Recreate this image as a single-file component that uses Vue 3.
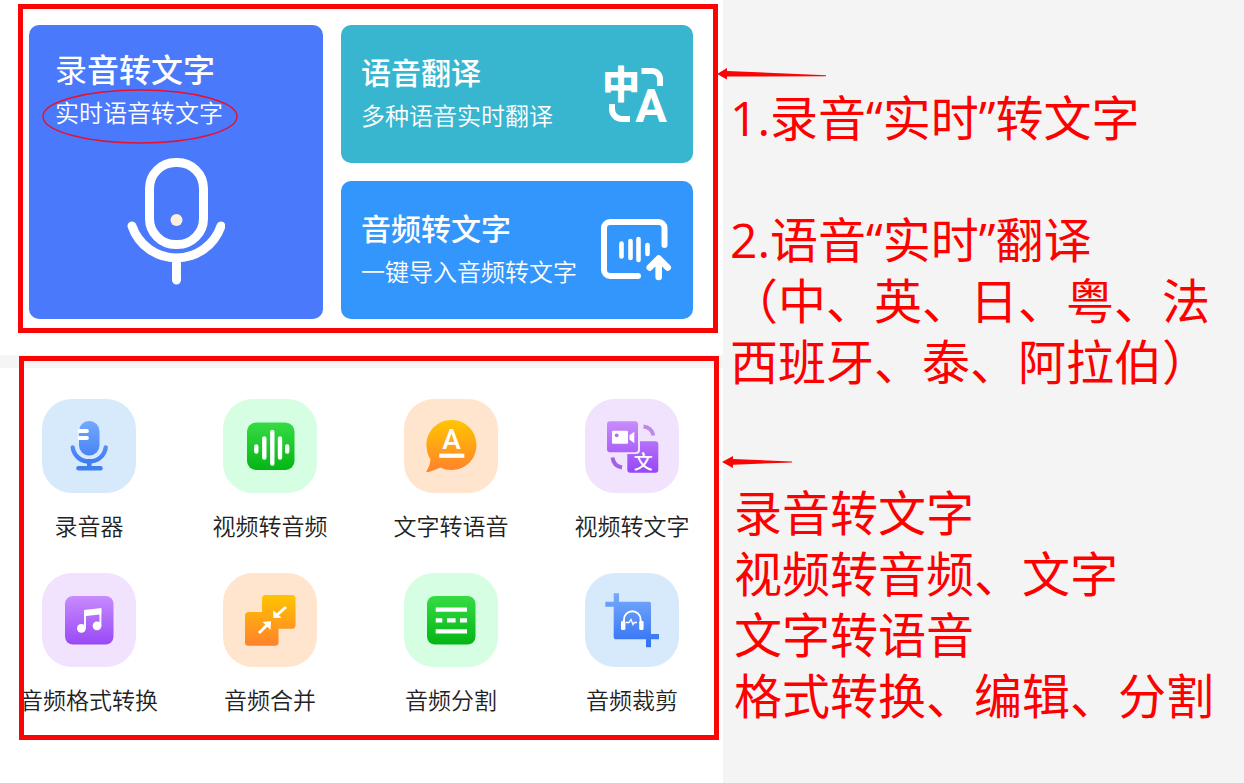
<template>
  <div class="page">
    <!-- 渐变定义,图标共用 -->
    <svg class="defs" width="0" height="0" aria-hidden="true">
      <defs>
        <linearGradient
          v-for="g in gradients"
          :id="g.id"
          :key="g.id"
          gradientUnits="userSpaceOnUse"
          x1="0"
          y1="22"
          x2="0"
          y2="73"
        >
          <stop offset="0" :stop-color="g.from" />
          <stop offset="1" :stop-color="g.to" />
        </linearGradient>
      </defs>
    </svg>

    <main class="app">
      <!-- 主要功能 -->
      <section class="feature-box">
        <button type="button" class="card card-record">
          <span class="card-text">
            <span class="card-title"><span class="thin">录</span>音转文字</span>
            <span class="card-sub">实时语音转文字</span>
          </span>
          <svg class="circle-mark" viewBox="0 0 196 55" fill="none" stroke="#e8102c">
            <ellipse cx="98" cy="27.5" rx="97" ry="26.5" stroke-width="1.4" />
          </svg>
          <svg class="mic" viewBox="0 0 98 128" fill="none" stroke="#fff" stroke-width="9" stroke-linecap="round">
            <rect x="22.5" y="5.5" width="54" height="82" rx="26" />
            <circle cx="49.5" cy="63" r="6" fill="#fdeee2" stroke="none" />
            <path d="M5 69A47 47 0 0 0 94 69M49.5 104v19" />
          </svg>
        </button>

        <div class="card-column">
          <button type="button" class="card card-translate">
            <span class="card-text">
              <span class="card-title">语音翻译</span>
              <span class="card-sub">多种语音实时翻译</span>
            </span>
            <svg class="card-icon" viewBox="0 0 72 64">
              <text class="glyph-zh" x="20" y="36" text-anchor="middle">中</text>
              <text class="glyph-en" x="50" y="60" text-anchor="middle">A</text>
              <path d="M40.500 9H51a8 8 0 0 1 8 8v7M11 42v5a10 10 0 0 0 10 10h8" fill="none" stroke="#fff" stroke-width="6" />
            </svg>
          </button>

          <button type="button" class="card card-import">
            <span class="card-text">
              <span class="card-title">音频转文字</span>
              <span class="card-sub">一键导入音频转文字</span>
            </span>
            <svg class="card-icon" viewBox="0 0 72 64" fill="none" stroke="#fff" stroke-width="6" stroke-linecap="round" stroke-linejoin="round">
              <path d="M63.500 27V10a6 6 0 0 0-6-6H9a6 6 0 0 0-6 6v42a6 6 0 0 0 6 6h28" />
              <path d="M20.500 25.500v13M29.500 23v17M37.500 21v21M46.500 27v9" stroke-width="4.600" />
              <path d="M57.700 41v18M48.700 49.500l9-9 9 9" stroke-width="6.600" />
            </svg>
          </button>
        </div>
      </section>

      <!-- 工具列表 -->
      <section class="tools">
        <div class="tool-box">
          <button v-for="tool in tools" :key="tool.name" type="button" class="tool">
            <span :class="['tile', tool.color]">
              <svg v-if="tool.icon === 'mic'" viewBox="0 0 94 94" fill="none" stroke-linecap="round">
                <rect x="37" y="22" width="20.500" height="34.500" rx="10" fill="url(#blue)" />
                <path d="M37.500 32h7.500M37.500 39h7.500" stroke="#fff" stroke-width="3.800" />
                <path d="M30.700 48.500C32 57 39 62.500 47.300 62.500S62.500 57 63.700 48.500" stroke="url(#blue)" stroke-width="4.400" />
                <path d="M47.300 62v6M36.500 69.300h22" stroke="#3f7fee" stroke-width="4.600" />
              </svg>

              <svg v-else-if="tool.icon === 'wave'" viewBox="0 0 94 94">
                <rect x="24" y="23.500" width="47.500" height="47.500" rx="9" fill="url(#green)" />
                <path
                  d="M33.300 47.500v5M41.300 39.500v19M49.300 33v31.500M57 39.500v19M64.200 47.500v5"
                  stroke="#fff"
                  stroke-width="4.400"
                  stroke-linecap="round"
                />
              </svg>

              <svg v-else-if="tool.icon === 'bubble'" viewBox="0 0 94 94">
                <path
                  d="M47.500 21C61.600 21 72.500 32 72.500 46S61.600 71 47.500 71C43.500 71 40 70.300 36.500 68.500C32 70.500 27.500 72.500 22.800 73.300C22.300 73.300 22.200 72.800 22.400 72.400C24.500 69 26 65.500 26.500 60.500C23.800 56 22.500 51.500 22.500 46C22.500 32 33.500 21 47.500 21Z"
                  fill="url(#orange)"
                />
                <text class="bubble-a" x="47.500" y="50" text-anchor="middle">A</text>
                <rect x="35.300" y="54.600" width="25" height="4.200" fill="#fff" />
              </svg>

              <svg v-else-if="tool.icon === 'video'" viewBox="0 0 94 94">
                <rect x="42.300" y="42.300" width="31" height="31.500" rx="3" fill="url(#purple)" />
                <rect x="20" y="20" width="35" height="35" rx="4" fill="#f1e3fe" />
                <rect x="22" y="22.300" width="31" height="31" rx="3" fill="url(#purple)" />
                <rect x="27" y="31.700" width="16" height="13" rx="1" fill="#fff" />
                <path d="M49.300 32.700v11.600L44.500 40.500v-4.200Z" fill="#fff" />
                <circle cx="31.700" cy="36.300" r="1.900" fill="#b36df7" />
                <text class="video-zh" x="58.200" y="69.500" text-anchor="middle">文</text>
                <path d="M58.500 27.500C63.500 28 67.500 31.500 68.300 36.500" fill="none" stroke="#bd8aec" stroke-width="4" />
                <path d="M27.500 58.500C28.200 64 31.500 67.500 37 68.500" fill="none" stroke="#9f62e4" stroke-width="4" />
              </svg>

              <svg v-else-if="tool.icon === 'music'" viewBox="0 0 94 94">
                <rect x="23" y="23" width="48.500" height="48.500" rx="8" fill="url(#purple)" />
                <path d="M42 37L59.300 35V41.200L42 43.200Z" fill="#fff" />
                <path d="M43 38v17M58.400 36v17" stroke="#fff" stroke-width="1.900" />
                <circle cx="39.400" cy="55.300" r="4.400" fill="#fff" />
                <circle cx="55" cy="52.800" r="4.400" fill="#fff" />
              </svg>

              <svg v-else-if="tool.icon === 'merge'" viewBox="0 0 94 94">
                <rect x="39" y="22" width="33.500" height="33.700" rx="3.500" fill="url(#orange)" />
                <rect x="22" y="39" width="33.500" height="33.700" rx="3.500" fill="url(#orange)" />
                <path d="M63 34L54 42M36 60L44.500 51.500" stroke="#fff" stroke-width="3" />
                <path d="M50.300 37.500L58.700 44.800L50.300 45ZM39.500 49L48 48L47.500 56.700Z" fill="#fff" />
              </svg>

              <svg v-else-if="tool.icon === 'split'" viewBox="0 0 94 94">
                <rect x="23" y="23" width="48.500" height="48.500" rx="8" fill="url(#green)" />
                <path d="M31.700 36.700h31.300M31.700 47.300h6.600M43 47.300h8.600M56 47.300h7M31.700 58.300h31.300" stroke="#fff" stroke-width="4.200" />
              </svg>

              <svg v-else viewBox="0 0 94 94">
                <path
                  d="M28.700 20.300H34V28.700H64Q66 28.700 66 30.700V61H74V66.300H66V74.300H61V66.300H30.700Q28.700 66.300 28.700 64.300V33.700H20.300V28.700H28.700Z"
                  fill="url(#blue)"
                />
                <path d="M39 49.500V46.500a8.200 8.200 0 0 1 16.600 0V49.500" fill="none" stroke="#fff" stroke-width="1.900" />
                <rect x="36" y="47.700" width="4.400" height="9.300" rx="1.600" fill="#fff" />
                <rect x="54.200" y="47.700" width="4.400" height="9.300" rx="1.600" fill="#fff" />
                <path d="M41 49.500h3l2-3 2 5 1.300-2h2.700" fill="none" stroke="#fff" stroke-width="1.300" />
              </svg>
            </span>
            <span class="tool-name">{{ tool.name }}</span>
          </button>
        </div>
      </section>
    </main>

    <!-- 右侧说明 -->
    <aside class="notes">
      <svg class="arrow arrow-top" viewBox="0 0 110 12" fill="#fa0505">
        <path d="M0 6L10 0V3L109 7.300V8.300L10 8.500V11.500Z" />
      </svg>
      <p class="note">1.录音“实时”转文字<br /><br />2.语音“实时”翻译<br />（中、英、日、粤、法<br />西班牙、泰、阿拉伯）</p>
      <svg class="arrow arrow-bottom" viewBox="0 0 72 12" fill="#fa0505">
        <path d="M0 6L11 0V3L70 5.600V6.400L11 8.800V12Z" />
      </svg>
      <p class="note note-list">录音转文字<br />视频转音频、文字<br />文字转语音<br />格式转换、编辑、分割</p>
    </aside>
  </div>
</template>

<script setup>
import { ref } from 'vue'

// 图标渐变色
const gradients = [
  { id: 'blue', from: '#75a9fc', to: '#3272f2' },
  { id: 'green', from: '#38dc46', to: '#02b413' },
  { id: 'orange', from: '#ffc400', to: '#ff812d' },
  { id: 'purple', from: '#c98cfd', to: '#9747f5' }
]

// 工具列表
const tools = ref([
  { name: '录音器', icon: 'mic', color: 'blue' },
  { name: '视频转音频', icon: 'wave', color: 'green' },
  { name: '文字转语音', icon: 'bubble', color: 'orange' },
  { name: '视频转文字', icon: 'video', color: 'purple' },
  { name: '音频格式转换', icon: 'music', color: 'purple' },
  { name: '音频合并', icon: 'merge', color: 'orange' },
  { name: '音频分割', icon: 'split', color: 'green' },
  { name: '音频裁剪', icon: 'crop', color: 'blue' }
])
</script>

<style>
body {
  background: #fff;
}
</style>

<style scoped>
.page {
  display: grid;
  grid-template-columns: 723fr 521fr;
  min-height: 100vh;
  font-family: 'Noto Sans CJK SC', sans-serif;
}

.defs {
  position: absolute;
}

button {
  border: 0;
  padding: 0;
  background: none;
  font-family: inherit;
  cursor: pointer;
}

.app {
  min-width: 0;
}

/* 主要功能 */
.feature-box {
  display: grid;
  grid-template-columns: 294fr 352fr;
  gap: 18px;
  margin: 4px 5px 22px 18px;
  padding: 16px 20px 9px 6px;
  border: 5px solid #fa0505;
}

.card {
  display: flex;
  border-radius: 10px;
  color: #fff;
  text-align: left;
}

.card-record {
  position: relative;
  flex-direction: column;
  padding: 24px 26px 30px;
  background: #4a79fc;
}

.card-column {
  display: grid;
  grid-template-rows: 138px 138px;
  gap: 18px;
}

.card-translate,
.card-import {
  align-items: center;
  justify-content: space-between;
  padding: 0 20px;
}

.card-translate {
  background: #38b6d0;
}

.card-import {
  background: #3396fd;
}

.card-text {
  display: flex;
  flex-direction: column;
  gap: 4px;
}

.card-title {
  font-size: 30px;
  font-weight: 500;
  line-height: 38px;
  white-space: nowrap;
}

.card-record .card-title {
  font-size: 32px;
}

.thin {
  font-weight: 400;
}

.card-sub {
  font-size: 24px;
  font-weight: 350;
  line-height: 42px;
  white-space: nowrap;
}

.card-icon {
  flex: none;
  width: 72px;
  height: 64px;
  overflow: visible;
}

.glyph-zh {
  font-size: 38px;
  font-weight: 900;
  fill: #fff;
}

.glyph-en {
  font-family: Roboto, sans-serif;
  font-size: 47px;
  font-weight: 700;
  fill: #fff;
}

.circle-mark {
  position: absolute;
  left: 13px;
  top: 64px;
  width: 196px;
  height: 55px;
}

.mic {
  align-self: center;
  width: 98px;
  height: 128px;
  margin-top: 24px;
}

/* 工具列表 */
.tools {
  padding: 1px 4px 0 19px;
  background: linear-gradient(#f5f5f5 13px, #fff 13px);
}

.tool-box {
  display: grid;
  grid-template-columns: repeat(4, 94px);
  justify-content: space-between;
  row-gap: 32px;
  padding: 38px 35px 20px 18px;
  border: 5px solid #fa0505;
  overflow: hidden;
}

.tool {
  display: flex;
  flex-direction: column;
  align-items: center;
  gap: 16px;
}

.tile {
  width: 94px;
  height: 94px;
  border-radius: 30px;
}

.tile svg {
  display: block;
}

.tile.blue {
  background: #d7eafc;
}

.tile.green {
  background: #d6fee3;
}

.tile.orange {
  background: #ffe5ce;
}

.tile.purple {
  background: #f1e3fe;
}

.tool-name {
  color: #222;
  font-size: 23px;
  font-weight: 350;
  line-height: 32px;
  white-space: nowrap;
}

.bubble-a {
  font-family: Roboto, sans-serif;
  font-size: 28px;
  font-weight: 500;
  fill: #fff;
}

.video-zh {
  font-size: 19px;
  font-weight: 500;
  fill: #fff;
}

/* 右侧说明 */
.notes {
  position: relative;
  padding: 87px 0 0 7px;
  background: #f4f4f4;
}

.note {
  margin: 0;
  color: #fe0000;
  font-family: 'Open Sans', 'Noto Sans CJK SC', sans-serif;
  font-size: 48px;
  line-height: 61px;
  white-space: nowrap;
}

.note-list {
  margin-top: 90px;
  padding-left: 4px;
}

.arrow {
  position: absolute;
  height: 12px;
}

.arrow-top {
  left: -6px;
  top: 68px;
  width: 110px;
}

.arrow-bottom {
  left: -1px;
  top: 456px;
  width: 72px;
}
</style>
